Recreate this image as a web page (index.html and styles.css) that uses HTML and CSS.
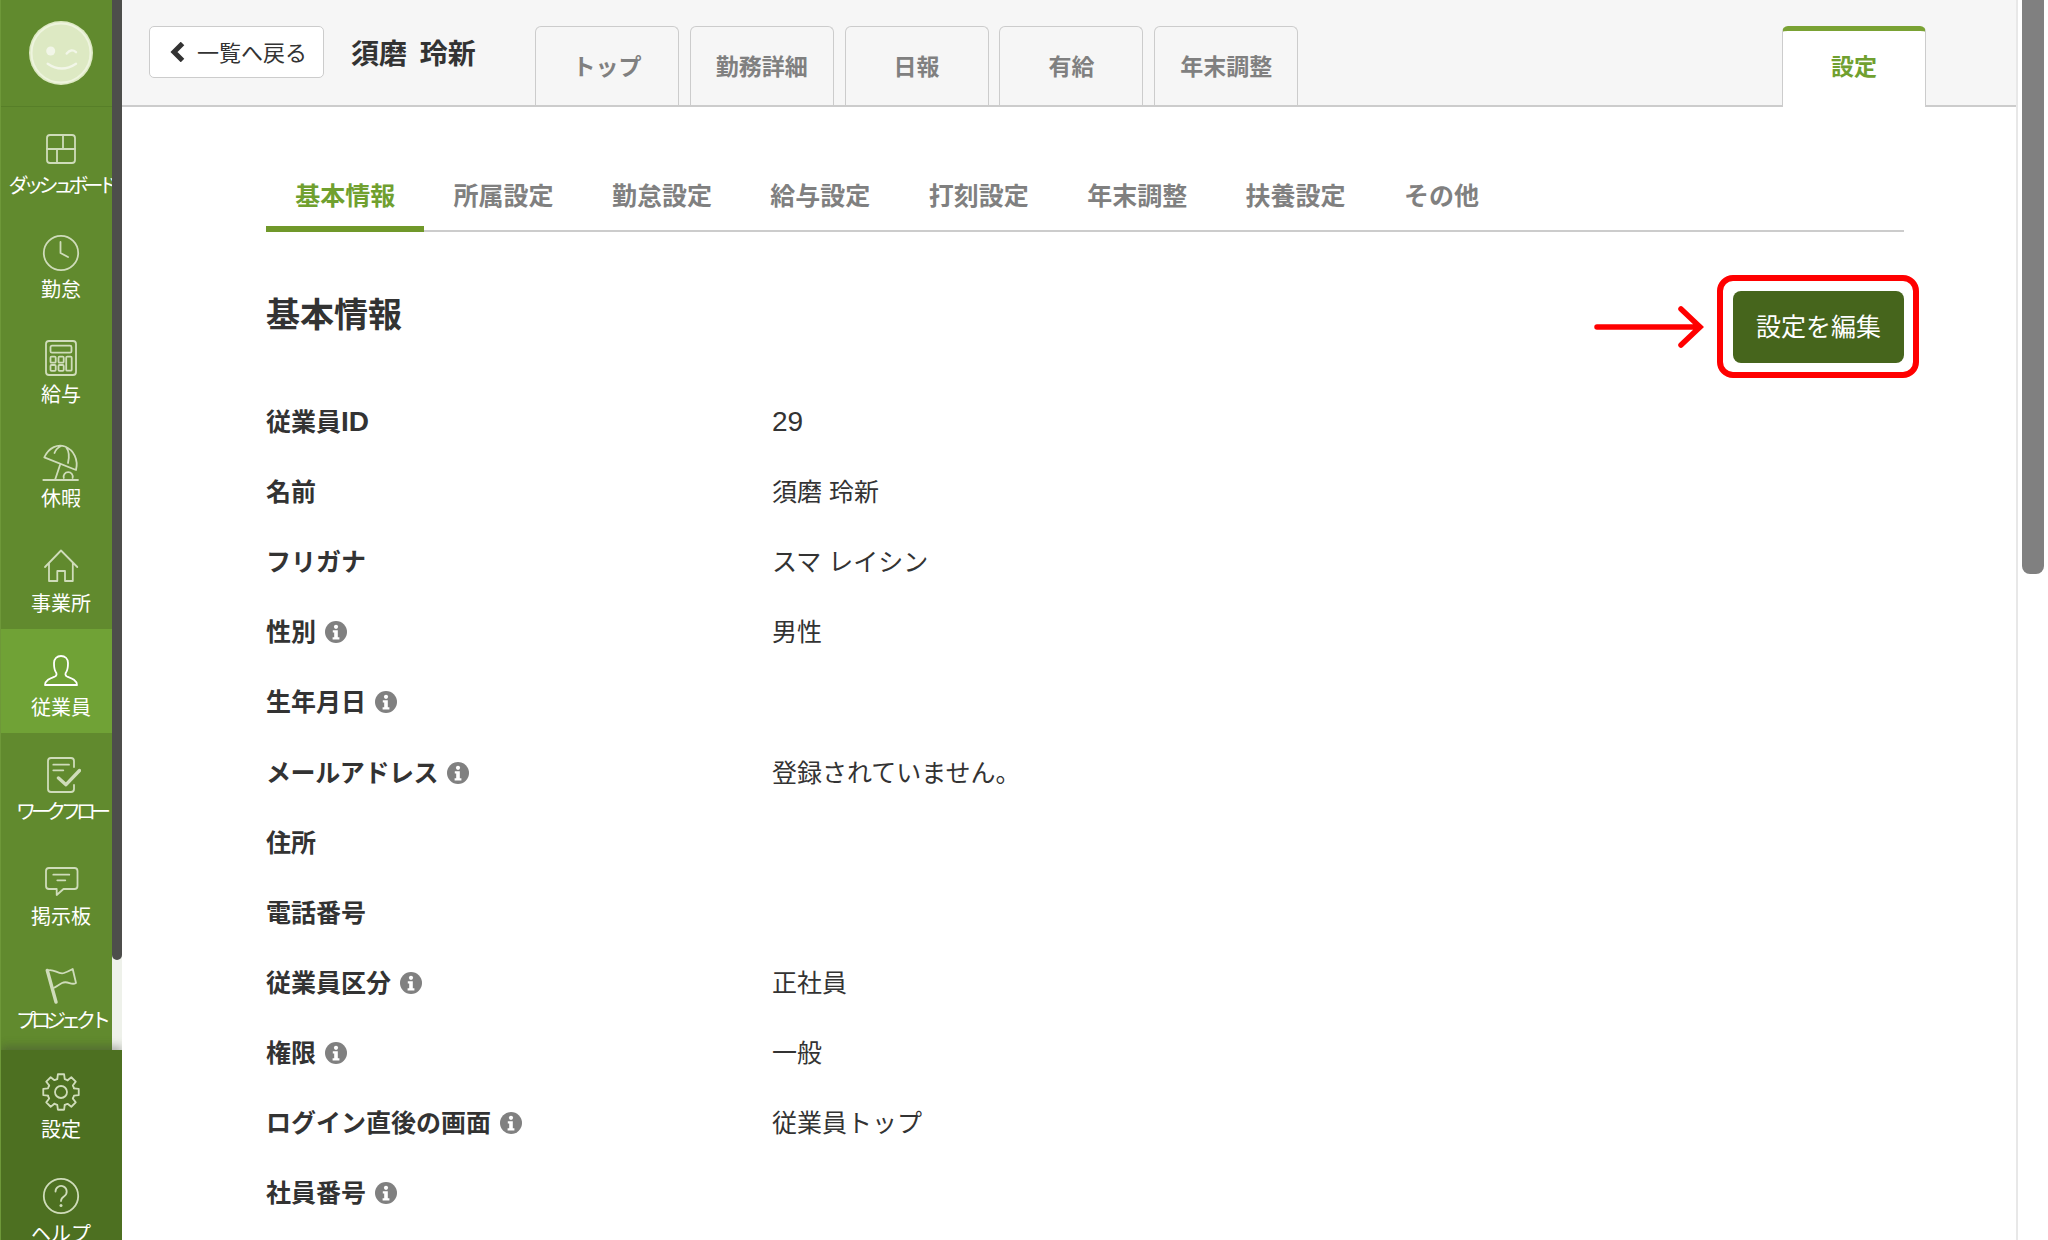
FILE: index.html
```html
<!DOCTYPE html>
<html lang="ja">
<head>
    <meta charset="UTF-8">
    <title>須磨 玲新 - 設定</title>
    <link rel="stylesheet" href="styles.css">
</head>
<body>
    <svg class="sprites" width="0" height="0">
        <defs>
            <path id="gearTooth" d="M16.28 7.02L16.87 2.27H23.13L23.72 7.02A13.5 13.5 0 0 1 26.55 8.19"/>
            <g id="infoIcon">
                <circle cx="11" cy="11" r="11" fill="#808080"/>
                <circle cx="11" cy="5.8" r="2.1" fill="#fff"/>
                <path d="M7.8 9.2h5v7h1.6v2.4H7.6v-2.4h1.6v-4.6H7.8z" fill="#fff"/>
            </g>
        </defs>
    </svg>
    <div class="app">
        <aside class="sidebar">
            <div class="logo">
                <svg viewBox="0 0 64 64" width="64" height="64">
                    <circle cx="32" cy="32" r="32" fill="#dde9c3"/>
                    <circle cx="32" cy="32" r="29.5" fill="none" stroke="#eef4de" stroke-width="2"/>
                    <circle cx="21.7" cy="30" r="4.5" fill="#f2f6e8"/>
                    <path d="M37.7 32.6q4.6-5.6 9.3-1.4" fill="none" stroke="#f2f6e8" stroke-width="2.4" stroke-linecap="round"/>
                    <path d="M18.7 42.7q14 9.5 28.3 0" fill="none" stroke="#f2f6e8" stroke-width="2.4" stroke-linecap="round"/>
                </svg>
            </div>
            <nav class="side-nav">
                <a class="side-item">
                    <svg class="side-icon" viewBox="0 0 40 40"><rect x="6" y="6" width="28" height="28" rx="3"/><path d="M6 20H34M22 6V20M16 20V34"/></svg>
                    <span class="side-label tight">ダッシュボード</span>
                </a>
                <a class="side-item">
                    <svg class="side-icon" viewBox="0 0 40 40"><circle cx="20" cy="20" r="17.2"/><path d="M19.5 9V20L27 24"/></svg>
                    <span class="side-label">勤怠</span>
                </a>
                <a class="side-item">
                    <svg class="side-icon" viewBox="0 0 40 40"><rect x="5" y="3" width="30" height="34" rx="3"/><rect x="9.5" y="7.7" width="21" height="7" rx="1.5"/><rect x="9.5" y="18.7" width="5.2" height="6" rx="1"/><rect x="17.5" y="18.7" width="5.2" height="6" rx="1"/><rect x="25.2" y="18.7" width="5.5" height="14" rx="1"/><rect x="9.5" y="27" width="5.2" height="5.8" rx="1"/><rect x="17.5" y="27" width="5.2" height="5.8" rx="1"/></svg>
                    <span class="side-label">給与</span>
                </a>
                <a class="side-item">
                    <svg class="side-icon" viewBox="0 0 40 40"><path d="M3.3 15.3C8 5 17 2 24 4.5C33 8 37.5 18 35 28ZM13.5 11C14.5 8 17 5.5 20 4M27 21C28.5 15 28 9 25 5M19 23L14 38"/><path d="M2.3 38H37"/><path d="M22.8 36A4.6 4.6 0 1 1 31.6 36"/></svg>
                    <span class="side-label">休暇</span>
                </a>
                <a class="side-item">
                    <svg class="side-icon" viewBox="0 0 40 40"><path d="M4 20L20 3.5L36.3 20M8 16V34H16.3V24H24V34H31.8V16"/></svg>
                    <span class="side-label">事業所</span>
                </a>
                <a class="side-item active">
                    <svg class="side-icon" viewBox="0 0 40 40"><path d="M4 34C4.5 29 9 27.5 14 25.5C16 24.5 16 22.5 14.5 20.5C13 18 13 15 13 12C13 7.5 16 5 20 5C24 5 27 7.5 27 12C27 15 27 18 25.5 20.5C24 22.5 24 24.5 26 25.5C31 27.5 35.5 29 36 34Z"/></svg>
                    <span class="side-label">従業員</span>
                </a>
                <a class="side-item">
                    <svg class="side-icon" viewBox="0 0 40 40"><path d="M33 12V6A3 3 0 0 0 30 3H10A3 3 0 0 0 7 6V34A3 3 0 0 0 10 37H30A3 3 0 0 0 33 34V30M12.3 9.7H28M12.3 15.3H22.3"/><path class="thick" d="M17.5 23L25 29.7L38.5 15.5"/></svg>
                    <span class="side-label tight">ワークフロー</span>
                </a>
                <a class="side-item">
                    <svg class="side-icon" viewBox="0 0 40 40"><path d="M8 8H33.5A3 3 0 0 1 36.5 11V26A3 3 0 0 1 33.5 29H22.5L15.7 35V29H8A3 3 0 0 1 5 26V11A3 3 0 0 1 8 8ZM12.3 14.7H28.3M16.3 20.3H24.3"/></svg>
                    <span class="side-label">掲示板</span>
                </a>
                <a class="side-item">
                    <svg class="side-icon" viewBox="0 0 40 40"><path class="thick" d="M6.3 6.5L15 38"/><path d="M6.5 6.5C13 4 17 11 23 9C26 8 29 6.5 31.7 5L35 19C30 22 27 16 21 19C18 20.5 15 23 12.5 24"/></svg>
                    <span class="side-label tight">プロジェクト</span>
                </a>
            </nav>
            <div class="side-bottom">
                <a class="side-item">
                    <svg class="side-icon" viewBox="0 0 40 40">
                        <use href="#gearTooth"/>
                        <use href="#gearTooth" transform="rotate(45 20 20)"/>
                        <use href="#gearTooth" transform="rotate(90 20 20)"/>
                        <use href="#gearTooth" transform="rotate(135 20 20)"/>
                        <use href="#gearTooth" transform="rotate(180 20 20)"/>
                        <use href="#gearTooth" transform="rotate(225 20 20)"/>
                        <use href="#gearTooth" transform="rotate(270 20 20)"/>
                        <use href="#gearTooth" transform="rotate(315 20 20)"/>
                        <circle cx="20" cy="20" r="6"/>
                    </svg>
                    <span class="side-label">設定</span>
                </a>
                <a class="side-item">
                    <svg class="side-icon" viewBox="0 0 40 40"><circle cx="20" cy="20" r="17.2"/><path d="M14.5 15.5A5.6 5.6 0 1 1 23.2 20.2C21 21.6 20 22.6 20 25"/><circle class="dot" cx="20" cy="29.5" r="1.5"/></svg>
                    <span class="side-label">ヘルプ</span>
                </a>
            </div>
            <!-- sidebar's own scrollbar -->
            <div class="side-scroll"><div class="side-thumb"></div></div>
        </aside>

        <div class="main">
            <header class="topbar">
                <a class="back-btn">
                    <svg viewBox="0 0 16 20" width="16" height="20"><path d="M13.5 1.5L5 10L13.5 18.5" fill="none" stroke="#333" stroke-width="5"/></svg>
                    <span class="back-text">一覧へ戻る</span>
                </a>
                <h1 class="emp-name">須磨 玲新</h1>
                <div class="page-tabs">
                    <a class="page-tab">トップ</a>
                    <a class="page-tab">勤務詳細</a>
                    <a class="page-tab">日報</a>
                    <a class="page-tab">有給</a>
                    <a class="page-tab">年末調整</a>
                    <a class="page-tab active">設定</a>
                </div>
            </header>

            <div class="content">
                <div class="sub-tabs">
                    <a class="sub-tab active">基本情報</a>
                    <a class="sub-tab">所属設定</a>
                    <a class="sub-tab">勤怠設定</a>
                    <a class="sub-tab">給与設定</a>
                    <a class="sub-tab">打刻設定</a>
                    <a class="sub-tab">年末調整</a>
                    <a class="sub-tab">扶養設定</a>
                    <a class="sub-tab">その他</a>
                </div>

                <div class="section-head">
                    <h2>基本情報</h2>
                    <div class="edit-wrap">
                        <a class="edit-btn">設定を編集</a>
                        <!-- annotation drawn on the screenshot -->
                        <svg class="note-arrow" viewBox="0 0 112 44" width="112" height="44"><path d="M3 22H106M87 4L106 22L87 40" fill="none" stroke="#f00" stroke-width="5.5" stroke-linecap="round" stroke-linejoin="miter"/></svg>
                        <div class="note-box"></div>
                    </div>
                </div>

                <div class="info-list">
                    <div class="info-row"><div class="info-label">従業員<span class="latin">ID</span></div><div class="latin">29</div></div>
                    <div class="info-row"><div class="info-label">名前</div><div>須磨 玲新</div></div>
                    <div class="info-row"><div class="info-label">フリガナ</div><div>スマ レイシン</div></div>
                    <div class="info-row"><div class="info-label">性別<svg class="info-icon" viewBox="0 0 22 22"><use href="#infoIcon"/></svg></div><div>男性</div></div>
                    <div class="info-row"><div class="info-label">生年月日<svg class="info-icon" viewBox="0 0 22 22"><use href="#infoIcon"/></svg></div><div></div></div>
                    <div class="info-row"><div class="info-label"><span class="kana">メールアドレス</span><svg class="info-icon" viewBox="0 0 22 22"><use href="#infoIcon"/></svg></div><div>登録されていません。</div></div>
                    <div class="info-row"><div class="info-label">住所</div><div></div></div>
                    <div class="info-row"><div class="info-label">電話番号</div><div></div></div>
                    <div class="info-row"><div class="info-label">従業員区分<svg class="info-icon" viewBox="0 0 22 22"><use href="#infoIcon"/></svg></div><div>正社員</div></div>
                    <div class="info-row"><div class="info-label">権限<svg class="info-icon" viewBox="0 0 22 22"><use href="#infoIcon"/></svg></div><div>一般</div></div>
                    <div class="info-row"><div class="info-label">ログイン直後の画面<svg class="info-icon" viewBox="0 0 22 22"><use href="#infoIcon"/></svg></div><div>従業員トップ</div></div>
                    <div class="info-row"><div class="info-label">社員番号<svg class="info-icon" viewBox="0 0 22 22"><use href="#infoIcon"/></svg></div><div></div></div>
                </div>
            </div>
        </div>

        <!-- page scrollbar -->
        <div class="page-scroll"><div class="page-thumb"></div></div>
    </div>
</body>
</html>
```

FILE: styles.css
```css
html, body {
    margin: 0;
    height: 100%;
    overflow: hidden;
}
body {
    font-family: "Liberation Sans", "Noto Sans CJK JP", sans-serif;
    font-size: 25px;
    color: #333;
    background-color: #fff;
}
a {
    display: block;
    text-decoration: none;
}
.sprites {
    display: block;
    height: 0;
}
.app {
    display: flex;
    height: 1240px;
    overflow: hidden;
}

/* sidebar */
.sidebar {
    position: relative;
    display: flex;
    flex-direction: column;
    flex: 0 0 122px;
    height: 1240px;
    background-color: #618a2e;
    border-left: 1px solid #6e9839;
    box-sizing: border-box;
    overflow: hidden;
}
.logo {
    display: flex;
    justify-content: center;
    flex: 0 0 107px;
    box-sizing: border-box;
    padding-top: 21px;
    margin-left: -1px;
    border-bottom: 1px solid #577f28;
}
.side-nav {
    flex: 0 0 943px;
    overflow: hidden;
}
.side-item {
    display: flex;
    flex-direction: column;
    align-items: center;
    height: 104.4px;
    box-sizing: border-box;
    padding-top: 22px;
    margin-left: -1px;
    color: #fff;
}
.side-item.active {
    background-color: #70a236;
}
.side-icon {
    flex: none;
    width: 40px;
    height: 40px;
    fill: none;
    stroke: #cfdcba;
    stroke-width: 1.8;
    stroke-linejoin: round;
    stroke-linecap: round;
}
.side-icon .thick {
    stroke-width: 3.4;
}
.side-icon .dot {
    fill: #cfdcba;
    stroke: none;
}
.active .side-icon {
    stroke: #fff;
}
.side-label {
    margin-top: 5px;
    font-size: 20px;
    line-height: 24px;
    white-space: nowrap;
}
.side-label.tight {
    letter-spacing: -5px;
}
.side-bottom {
    flex: 1;
    overflow: hidden;
    background-color: #4d7021;
    box-shadow: 0 -4px 8px rgba(60, 60, 60, 0.35);
    z-index: 2;
}
.side-bottom .side-label {
    margin-top: 6px;
}
.side-scroll {
    position: absolute;
    top: 0;
    right: 0;
    width: 10px;
    height: 1050px;
    background-color: #eef1ea;
}
.side-thumb {
    height: 960px;
    background-color: #4d4e4b;
    border-radius: 0 0 5px 5px;
}

/* header */
.main {
    flex: 1;
    min-width: 0;
}
.topbar {
    display: flex;
    align-items: flex-end;
    height: 107px;
    box-sizing: border-box;
    padding-left: 27px;
    background-color: #f6f6f6;
    border-bottom: 2px solid #ccc;
}
.back-btn {
    display: flex;
    align-items: center;
    gap: 12px;
    width: 175px;
    height: 52px;
    box-sizing: border-box;
    margin-bottom: 27px;
    padding-left: 19px;
    font-size: 22px;
    color: #333;
    background-color: #fff;
    border: 1px solid #ccc;
    border-radius: 5px;
}
.back-text {
    margin-bottom: 2px;
}
.emp-name {
    margin: 0 0 24px 27px;
    width: 184px;
    font-size: 28px;
    line-height: 52px;
    font-weight: 700;
    word-spacing: 5px;
    color: #333;
}
.page-tabs {
    display: flex;
    flex: 1;
    gap: 10.8px;
    margin-bottom: -2px;
    padding-right: 90px;
}
.page-tab {
    width: 144px;
    height: 81px;
    box-sizing: border-box;
    padding-top: 1px;
    line-height: 79px;
    text-align: center;
    font-size: 23px;
    font-weight: 700;
    color: #808080;
    border: 1px solid #ccc;
    border-bottom: none;
    border-radius: 6px 6px 0 0;
}
.page-tab.active {
    margin-left: auto;
    color: #70a02f;
    background-color: #fff;
    border-top: 5px solid #7aa234;
    padding-top: 0;
    line-height: 72px;
}

/* content */
.content {
    padding: 0 112px 0 144px;
}
.sub-tabs {
    display: flex;
    height: 125px;
    box-sizing: border-box;
    padding-top: 63px;
    border-bottom: 2px solid #ccc;
}
.sub-tab {
    height: 62px;
    box-sizing: border-box;
    padding: 0 29.2px;
    line-height: 52px;
    text-align: center;
    font-size: 25px;
    font-weight: 700;
    color: #808080;
}
.sub-tab.active {
    color: #70a02f;
    border-bottom: 6px solid #70982a;
    border-radius: 6px 6px 0 0;
}
.section-head {
    display: flex;
    justify-content: space-between;
    align-items: flex-start;
    height: 155px;
    box-sizing: border-box;
    padding-top: 59px;
}
.section-head h2 {
    margin: -1px 0 0;
    font-size: 34px;
    line-height: 50px;
    font-weight: 700;
    color: #333;
}
.edit-wrap {
    position: relative;
}
.edit-btn {
    width: 171px;
    height: 72px;
    line-height: 72px;
    text-align: center;
    font-size: 25px;
    color: #fff;
    background-color: #46651c;
    border-radius: 8px;
}
.note-box {
    position: absolute;
    top: -16px;
    left: -16px;
    width: 202px;
    height: 103px;
    box-sizing: border-box;
    border: 6px solid #f00;
    border-radius: 16px;
}
.note-arrow {
    position: absolute;
    top: 14px;
    left: -139px;
}
.info-row {
    display: flex;
    align-items: center;
    height: 70.1px;
    line-height: 36px;
}
.info-label {
    display: flex;
    align-items: center;
    flex: 0 0 506px;
    font-weight: 700;
    color: #333;
}
.latin {
    font-size: 28px;
}
.kana {
    letter-spacing: -0.4px;
}
.info-icon {
    width: 22px;
    height: 22px;
    margin-left: 9px;
}

/* page scrollbar */
.page-scroll {
    flex: 0 0 32px;
    height: 1240px;
    box-sizing: border-box;
    padding: 0 4px;
    background-color: #fff;
    border-left: 2px solid #e8e8e8;
}
.page-thumb {
    height: 574px;
    background-color: #808080;
    border-radius: 0 0 8px 8px;
}
```
